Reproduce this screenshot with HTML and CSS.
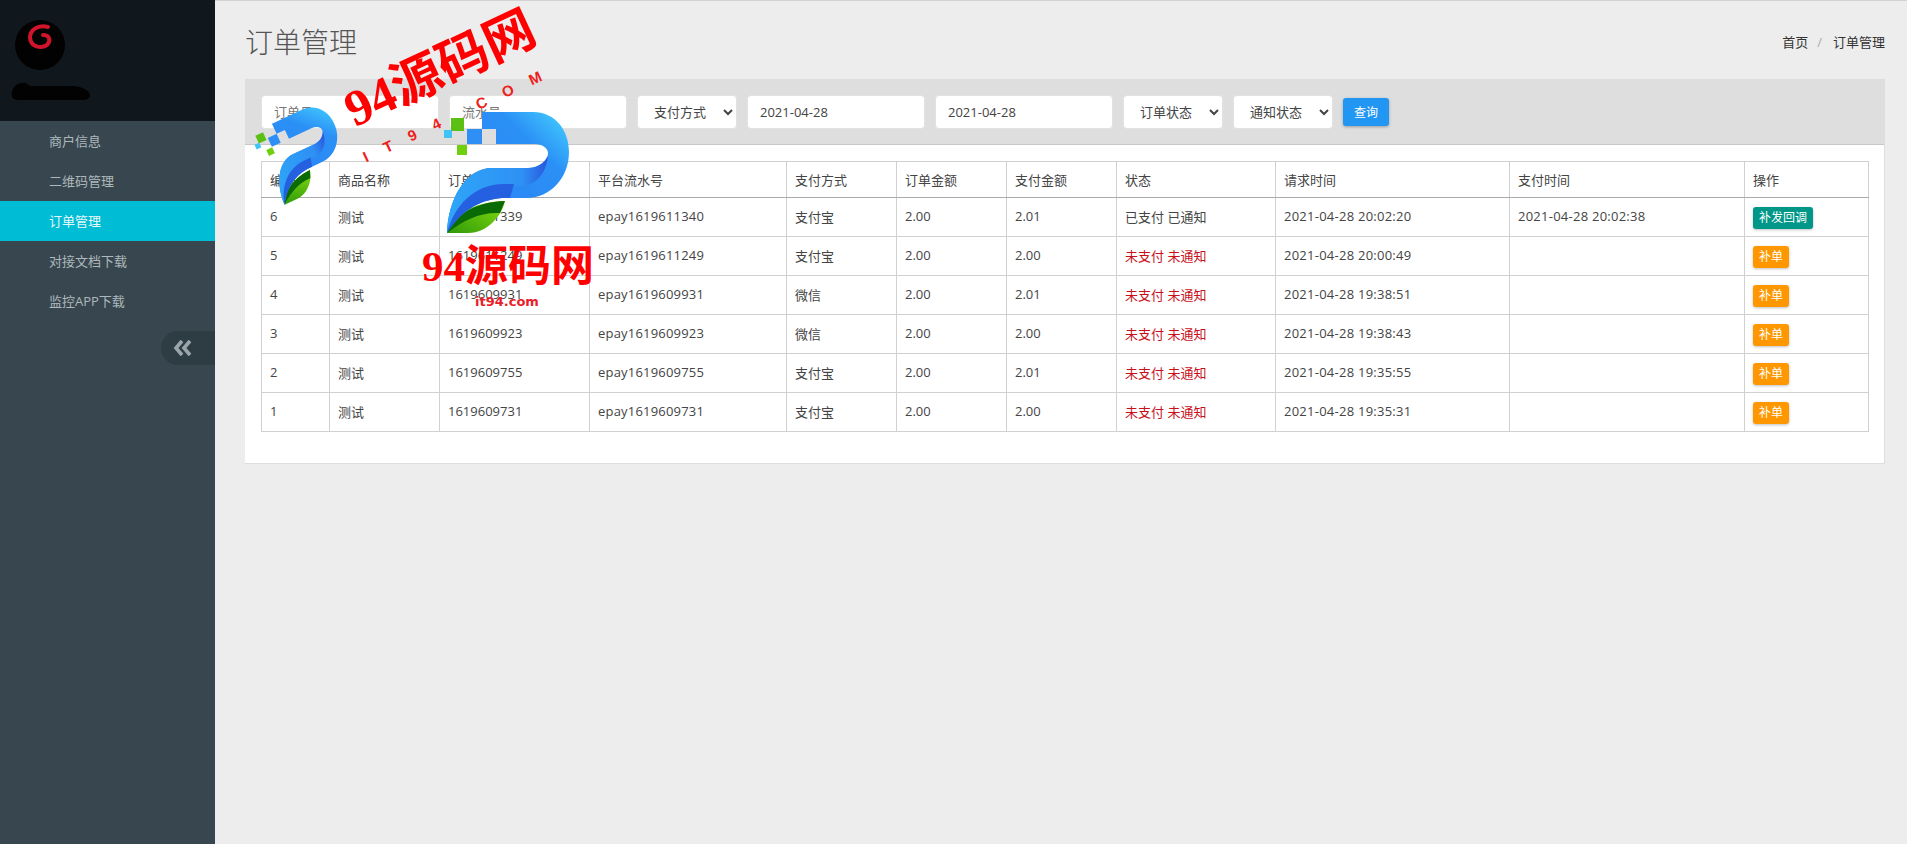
FILE: index.html
```html
<!DOCTYPE html>
<html lang="zh-CN">
<head>
    <meta charset="UTF-8">
    <title>订单管理</title>
    <link rel="stylesheet" href="styles.css">
</head>
<body>
    <aside class="sidebar">
        <div class="logo">
            <svg width="215" height="121" viewBox="0 0 215 121">
                <circle cx="40" cy="45" r="25" fill="#020203"/>
                <path d="M48 27 C38 24 30 30 30 38 C31 47 41 49 47 45 C51 41 50 35 43 35" fill="none" stroke="#cf142b" stroke-width="4" stroke-linecap="round"/>
                <path d="M12 92 C13 85 20 82 26 83 L30 86 H73 C80 86 90 90 90 95 C90 100 84 100 80 100 H18 C12 100 11 96 12 92 Z" fill="#020203"/>
            </svg>
        </div>
        <ul class="menu">
            <li>商户信息</li>
            <li>二维码管理</li>
            <li class="active">订单管理</li>
            <li>对接文档下载</li>
            <li>监控APP下载</li>
        </ul>
        <div class="toggle-row">
            <div class="toggle">
                <svg width="20" height="18" viewBox="0 0 20 18">
                    <path d="M9 2 L3 9 L9 16 M17 2 L11 9 L17 16" fill="none" stroke="#9aa6ac" stroke-width="3.6"/>
                </svg>
            </div>
        </div>
    </aside>

    <main class="main">
        <div class="page-head">
            <h1>订单管理</h1>
            <div class="crumbs"><span>首页</span><span class="sep">/</span><span>订单管理</span></div>
        </div>

        <section class="card">
            <form class="filters">
                <input class="field" type="text" placeholder="订单号">
                <input class="field" type="text" placeholder="流水号">
                <select class="pick"><option>支付方式</option></select>
                <input class="field" type="text" value="2021-04-28">
                <input class="field" type="text" value="2021-04-28">
                <select class="pick"><option>订单状态</option></select>
                <select class="pick"><option>通知状态</option></select>
                <button class="search" type="button">查询</button>
            </form>

            <div class="table-wrap">
                <table>
                    <colgroup>
                        <col class="c-id"><col class="c-name"><col class="c-order"><col class="c-flow">
                        <col class="c-money"><col class="c-money"><col class="c-money"><col class="c-state">
                        <col class="c-req"><col class="c-paid"><col class="c-op">
                    </colgroup>
                    <thead>
                        <tr><th>编号</th><th>商品名称</th><th>订单号</th><th>平台流水号</th><th>支付方式</th><th>订单金额</th><th>支付金额</th><th>状态</th><th>请求时间</th><th>支付时间</th><th>操作</th></tr>
                    </thead>
                    <tbody>
                        <tr><td>6</td><td>测试</td><td>1619611339</td><td class="flow">epay1619611340</td><td>支付宝</td><td>2.00</td><td>2.01</td><td>已支付 已通知</td><td class="time">2021-04-28 20:02:20</td><td class="time">2021-04-28 20:02:38</td><td><span class="btn teal">补发回调</span></td></tr>
                        <tr><td>5</td><td>测试</td><td>1619611249</td><td class="flow">epay1619611249</td><td>支付宝</td><td>2.00</td><td>2.00</td><td class="unpaid">未支付 未通知</td><td class="time">2021-04-28 20:00:49</td><td></td><td><span class="btn amber">补单</span></td></tr>
                        <tr><td>4</td><td>测试</td><td>1619609931</td><td class="flow">epay1619609931</td><td>微信</td><td>2.00</td><td>2.01</td><td class="unpaid">未支付 未通知</td><td class="time">2021-04-28 19:38:51</td><td></td><td><span class="btn amber">补单</span></td></tr>
                        <tr><td>3</td><td>测试</td><td>1619609923</td><td class="flow">epay1619609923</td><td>微信</td><td>2.00</td><td>2.00</td><td class="unpaid">未支付 未通知</td><td class="time">2021-04-28 19:38:43</td><td></td><td><span class="btn amber">补单</span></td></tr>
                        <tr><td>2</td><td>测试</td><td>1619609755</td><td class="flow">epay1619609755</td><td>支付宝</td><td>2.00</td><td>2.01</td><td class="unpaid">未支付 未通知</td><td class="time">2021-04-28 19:35:55</td><td></td><td><span class="btn amber">补单</span></td></tr>
                        <tr><td>1</td><td>测试</td><td>1619609731</td><td class="flow">epay1619609731</td><td>支付宝</td><td>2.00</td><td>2.00</td><td class="unpaid">未支付 未通知</td><td class="time">2021-04-28 19:35:31</td><td></td><td><span class="btn amber">补单</span></td></tr>
                    </tbody>
                </table>
            </div>
        </section>
    </main>

    <!-- watermark stamped over the page -->
    <svg class="mark mark-small" width="100" height="110" viewBox="0 0 100 110">
        <use href="#pee" transform="translate(-7 31) rotate(-25) scale(.65)"/>
    </svg>
    <svg class="mark mark-big" width="180" height="140" viewBox="0 0 180 140">
        <defs>
            <linearGradient id="band" x1="0.3" y1="0.7" x2="1" y2="0">
                <stop offset="0" stop-color="#2a86f4"/>
                <stop offset="0.6" stop-color="#2b90f6"/>
                <stop offset="1" stop-color="#45d4ff"/>
            </linearGradient>
            <linearGradient id="fold" x1="0" y1="0" x2="1" y2="0">
                <stop offset="0" stop-color="#2ea6f8"/>
                <stop offset="0.75" stop-color="#2e90f4"/>
                <stop offset="1" stop-color="#2a55dc"/>
            </linearGradient>
            <linearGradient id="leaf" x1="0" y1="1" x2="1" y2="0">
                <stop offset="0" stop-color="#2f9a08"/>
                <stop offset="1" stop-color="#88dd10"/>
            </linearGradient>
            <g id="pee">
                <rect x="21" y="18" width="13" height="13" fill="#5cc014"/>
                <rect x="14" y="30" width="8" height="8" fill="#3fc4f5"/>
                <rect x="37" y="29" width="15" height="15" fill="#2f8ff5"/>
                <rect x="27" y="45" width="10" height="10" fill="#70d010"/>
                <path d="M17 133 C20 118 40 102 75 101 C72 115 58 133 38 133 Z" fill="url(#leaf)"/>
                <path d="M17 133 C24 116 44 102 75 101 L70 113 C50 112 34 120 17 133 Z" fill="#0a6a04"/>
                <path d="M52 12 H103 C125 12 139 30 139 52 C139 78 120 98 97 98 H72 C48 100 30 112 17 133 C18 100 35 68 62 68 H98 C110 68 118 60 118 53 C118 48 112 44 105 44 H66 V29 H52 Z" fill="url(#band)"/>
                <path d="M62 68 H98 C106 68 114 64 118 56 C116 74 106 84 94 86 H74 C48 86 30 104 17 133 C18 100 35 68 62 68 Z" fill="url(#fold)"/>
                <path d="M17 133 C24 106 44 84 74 84 L84 84 L80 98 H72 C48 100 30 112 17 133 Z" fill="#2560e0"/>
            </g>
        </defs>
        <use href="#pee"/>
    </svg>
    <div class="stamp stamp-tilt">94源码网</div>
    <div class="stamp-line">IT94 COM</div>
    <div class="stamp stamp-flat">94源码网</div>
    <div class="stamp-site">it94.com</div>
</body>
</html>
```

FILE: styles.css
```css
* {
    box-sizing: border-box;
}
html, body {
    height: 100%;
}
body {
    margin: 0;
    display: flex;
    position: relative;
    overflow: hidden;
    font-family: "Open Sans", "Noto Sans CJK SC", sans-serif;
    font-size: 13px;
    color: #444;
    background: #ededed;
}

/* sidebar */
.sidebar {
    width: 215px;
    flex: none;
    background: #38474f;
}
.logo {
    height: 121px;
    background: #11181d;
}
.logo svg {
    display: block;
}
.menu {
    list-style: none;
    margin: 0;
    padding: 0;
}
.menu li {
    height: 40px;
    line-height: 40px;
    padding-left: 49px;
    color: #aeb8bc;
}
.menu li.active {
    background: #00bcd4;
    color: #e8f8fa;
}
.toggle-row {
    display: flex;
    justify-content: flex-end;
    margin-top: 10px;
}
.toggle {
    width: 54px;
    height: 34px;
    padding-left: 12px;
    display: flex;
    align-items: center;
    background: #2e3c43;
    border-radius: 17px 0 0 17px;
}

/* main */
.main {
    flex: 1;
    padding: 0 23px 0 30px;
    border-top: 1px solid #d2d2d2;
}
.page-head {
    height: 78px;
    padding-top: 21px;
    display: flex;
    justify-content: space-between;
    align-items: flex-start;
}
h1 {
    margin: 0;
    font-size: 28px;
    font-weight: 300;
    line-height: 40px;
    color: #555;
}
.crumbs {
    display: flex;
    line-height: 40px;
    color: #333;
}
.crumbs .sep {
    margin: 0 11px 0 9px;
    color: #aaa;
}
.card {
    background: #fff;
    border-right: 1px solid #ddd;
    border-bottom: 1px solid #ddd;
    padding-bottom: 31px;
}
.filters {
    height: 66px;
    padding: 16px 16px 0;
    display: flex;
    gap: 10px;
    background: #dedede;
    border-bottom: 1px solid #c8c8c8;
}
.field, .pick {
    height: 34px;
    padding: 0 12px;
    background: #fff;
    border: 1px solid #e2e2e2;
    border-radius: 4px;
    font: inherit;
    color: #444;
    outline: none;
}
.field {
    width: 178px;
}
.field::placeholder {
    color: #777;
}
.pick {
    width: 100px;
}
.search {
    width: 46px;
    height: 28px;
    margin-top: 3px;
    border: none;
    border-radius: 3px;
    background: #2196f3;
    color: #fff;
    font: inherit;
    font-size: 12px;
    box-shadow: 0 1px 3px rgba(0, 0, 0, 0.3);
}

/* table */
.table-wrap {
    padding: 16px 15px 0 16px;
}
table {
    width: 100%;
    table-layout: fixed;
    border-collapse: collapse;
}
.c-id { width: 68px; }
.c-name { width: 110px; }
.c-order { width: 150px; }
.c-flow { width: 197px; }
.c-money { width: 110px; }
.c-state { width: 159px; }
.c-req { width: 234px; }
.c-paid { width: 235px; }
.c-op { width: 124px; }
th, td {
    padding: 0 8px;
    border: 1px solid #d0d0d0;
    text-align: left;
    font-weight: 400;
}
th {
    height: 36px;
    border-bottom: 1px solid #aaa;
}
td {
    height: 39px;
    padding-bottom: 2px;
}
.time {
    letter-spacing: 0.25px;
}
.flow {
    letter-spacing: 0.2px;
}
.unpaid {
    color: #c8101c;
}
.btn {
    display: inline-block;
    height: 22px;
    line-height: 21px;
    margin-top: 4px;
    padding: 0 6px;
    border-radius: 3px;
    color: #fff;
    font-size: 12px;
    vertical-align: middle;
    box-shadow: 0 1px 3px rgba(0, 0, 0, 0.25);
}
.teal {
    background: #009688;
}
.amber {
    background: #ff9800;
}

/* watermark */
.mark {
    position: absolute;
}
.mark-big {
    left: 430px;
    top: 100px;
}
.mark-small {
    left: 245px;
    top: 100px;
}
.stamp {
    position: absolute;
    font-family: "Liberation Serif", "Noto Sans CJK SC", serif;
    font-weight: 700;
    color: #f00;
    white-space: nowrap;
}
.stamp-tilt {
    left: 338px;
    top: 39px;
    font-size: 51px;
    line-height: 60px;
    transform: rotate(-25deg);
}
.stamp-flat {
    left: 422px;
    top: 241px;
    font-size: 43px;
    line-height: 52px;
}
.stamp-line {
    position: absolute;
    left: 354px;
    top: 103px;
    font-family: "Liberation Sans", sans-serif;
    font-size: 15px;
    font-weight: 700;
    line-height: 20px;
    letter-spacing: 18px;
    color: #ee2020;
    white-space: pre;
    transform: rotate(-25deg);
}
.stamp-site {
    position: absolute;
    left: 475px;
    top: 293px;
    font-family: "DejaVu Sans", sans-serif;
    font-size: 13px;
    font-weight: 700;
    line-height: 18px;
    color: #e8202a;
}
```
